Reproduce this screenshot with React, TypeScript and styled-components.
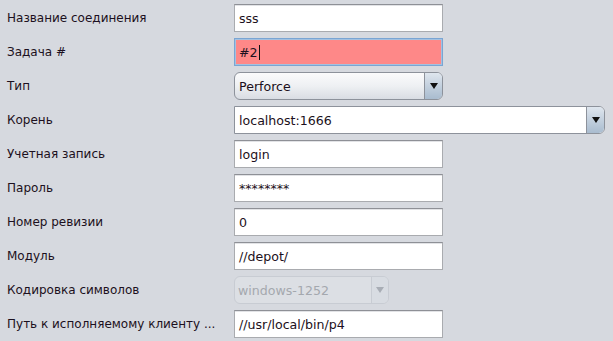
import { FC } from "react";
import styled, { createGlobalStyle } from "styled-components";

const GlobalStyle = createGlobalStyle`
  html, body {
    margin: 0;
    padding: 0;
    background: #d6d9df;
  }
  body {
    font-family: "DejaVu Sans", "Liberation Sans", sans-serif;
    font-size: 12px;
    color: #1c1020;
  }
`;

type TRow =
  | { label: string; kind: "text"; value: string; error?: boolean }
  | { label: string; kind: "combo"; value: string }
  | { label: string; kind: "editCombo"; value: string }
  | { label: string; kind: "disabledCombo"; value: string };

const rows: TRow[] = [
  { label: "Название соединения", kind: "text", value: "sss" },
  { label: "Задача #", kind: "text", value: "#2", error: true },
  { label: "Тип", kind: "combo", value: "Perforce" },
  { label: "Корень", kind: "editCombo", value: "localhost:1666" },
  { label: "Учетная запись", kind: "text", value: "login" },
  { label: "Пароль", kind: "text", value: "********" },
  { label: "Номер ревизии", kind: "text", value: "0" },
  { label: "Модуль", kind: "text", value: "//depot/" },
  { label: "Кодировка символов", kind: "disabledCombo", value: "windows-1252" },
  { label: "Путь к исполняемому клиенту ...", kind: "text", value: "//usr/local/bin/p4" },
];

const Arrow: FC<{ disabled?: boolean }> = ({ disabled }) => (
  <svg width="8" height="6" viewBox="0 0 8 6">
    <path d="M0 0 L8 0 L4 6 Z" fill={disabled ? "#a8adb5" : "#111"} />
  </svg>
);

const App: FC = () => {
  return (
    <Form>
      <GlobalStyle />
      {rows.map((row) => (
        <Row key={row.label}>
          <Label>{row.label}</Label>
          {row.kind === "text" && (
            <TextField error={row.error}>
              {row.value}
              {row.error && <Caret />}
            </TextField>
          )}
          {row.kind === "combo" && (
            <Combo>
              <span className="value">{row.value}</span>
              <ArrowButton>
                <Arrow />
              </ArrowButton>
            </Combo>
          )}
          {row.kind === "editCombo" && (
            <EditCombo>
              <span className="value">{row.value}</span>
              <ArrowButton>
                <Arrow />
              </ArrowButton>
            </EditCombo>
          )}
          {row.kind === "disabledCombo" && (
            <DisabledCombo>
              <span className="value">{row.value}</span>
              <DisabledArrowButton>
                <Arrow disabled />
              </DisabledArrowButton>
            </DisabledCombo>
          )}
        </Row>
      ))}
    </Form>
  );
};

export default App;

const Form = styled.div`
  display: flex;
  flex-direction: column;
  gap: 6px;
  padding: 4px 8px 0 7px;
`;

const Row = styled.div`
  display: grid;
  grid-template-columns: 227px 1fr;
  align-items: center;
  height: 28px;
`;

const Label = styled.div`
  font-size: 12px;
  white-space: nowrap;
`;

type TField = {
  error?: boolean;
};
const TextField = styled.div<TField>`
  box-sizing: border-box;
  width: 209px;
  height: 28px;
  display: flex;
  align-items: center;
  padding: 0 4px;
  font-size: 12.6px;
  background: ${({ error }) => (error ? "#fe8888" : "#ffffff")};
  border: 1px solid ${({ error }) => (error ? "#7aa5d3" : "#a9abaf")};
  border-top-color: ${({ error }) => (error ? "#7aa5d3" : "#8e9096")};
  box-shadow: ${({ error }) =>
    error ? "inset 0 0 0 1px #a3c1e0" : "inset 0 1px 0 #e2e3e6"};
`;

const Caret = styled.span`
  display: inline-block;
  width: 1px;
  height: 15px;
  margin-left: 1px;
  background: #111;
`;

const Combo = styled.div`
  box-sizing: border-box;
  width: 209px;
  height: 28px;
  display: flex;
  border: 1px solid #8d929b;
  border-radius: 6px;
  overflow: hidden;
  background: linear-gradient(#fbfbfc, #eef0f3 50%, #d9dde3);
  .value {
    flex: 1;
    display: flex;
    align-items: center;
    padding-left: 4px;
    font-size: 12.6px;
  }
`;

const EditCombo = styled.div`
  box-sizing: border-box;
  width: 371px;
  height: 28px;
  display: flex;
  border: 1px solid #8d929b;
  border-radius: 0 6px 6px 0;
  overflow: hidden;
  background: #ffffff;
  .value {
    flex: 1;
    display: flex;
    align-items: center;
    padding-left: 4px;
    font-size: 12.6px;
  }
`;

const ArrowButton = styled.div`
  width: 17px;
  display: flex;
  align-items: center;
  justify-content: center;
  border-left: 1px solid #8d929b;
  background: linear-gradient(#dfe6ee, #c3d0de 50%, #a9bccf);
`;

const DisabledCombo = styled.div`
  box-sizing: border-box;
  width: 155px;
  height: 28px;
  display: flex;
  border: 1px solid #c8ccd3;
  border-radius: 6px;
  overflow: hidden;
  background: #dcdfe4;
  .value {
    flex: 1;
    display: flex;
    align-items: center;
    padding-left: 3px;
    font-size: 12.6px;
    color: #a4a8ae;
  }
`;

const DisabledArrowButton = styled.div`
  width: 16px;
  display: flex;
  align-items: center;
  justify-content: center;
  border-left: 1px solid #c8ccd3;
  background: #d8dce2;
`;
